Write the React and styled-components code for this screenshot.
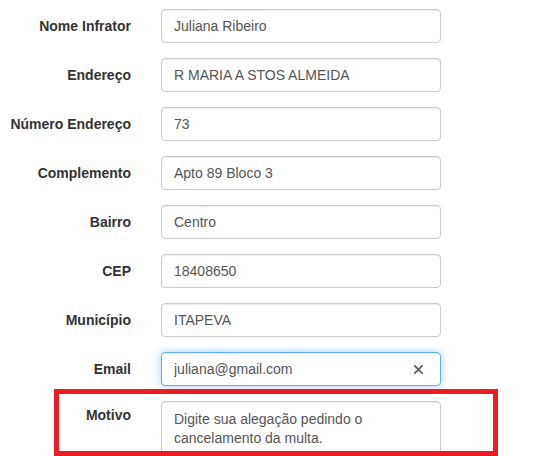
import React from "react";
import styled, { createGlobalStyle } from "styled-components";

const Global = createGlobalStyle`
  html, body { margin: 0; padding: 0; background: #fff; }
  body { font-family: "Liberation Sans", Arial, Helvetica, sans-serif; font-size: 14px; line-height: 1.42857; color: #333; }
  * { box-sizing: border-box; }
`;

const Page = styled.div`
  position: relative;
  width: 549px;
  height: 456px;
  overflow: hidden;
  padding-top: 9px;
`;

const Form = styled.form`
  display: flex;
  flex-direction: column;
  gap: 15px;
`;

const Row = styled.div`
  display: grid;
  grid-template-columns: 146px 310px;
  align-items: start;
`;

const Label = styled.label`
  text-align: right;
  font-weight: bold;
  padding: ${(p) => (p.$tight ? "5px" : "8px")} 15px 0 0;
  white-space: nowrap;
  color: #333;
`;

const Field = styled.div`
  position: relative;
  padding-left: 15px;
  width: 295px;
`;

const Input = styled.input`
  display: block;
  width: 280px;
  height: 34px;
  padding: 6px 12px;
  font: inherit;
  font-size: 14px;
  color: #555;
  background: #fff;
  border: 1px solid ${(p) => (p.$focus ? "#66afe9" : "#ccc")};
  border-radius: 4px;
  outline: none;
  box-shadow: ${(p) =>
    p.$focus
      ? "inset 0 1px 1px rgba(0,0,0,.075), 0 0 8px rgba(102,175,233,.6)"
      : "inset 0 1px 1px rgba(0,0,0,.075)"};
`;

const TextArea = styled.textarea`
  display: block;
  width: 280px;
  height: 80px;
  padding: 8px 12px 6px;
  font: inherit;
  font-size: 14px;
  line-height: 18.6px;
  color: #555;
  background: #fff;
  border: 1px solid #ccc;
  border-radius: 4px;
  resize: none;
  outline: none;
  overflow: hidden;
  box-shadow: inset 0 1px 1px rgba(0,0,0,.075);
`;

const Clear = styled.span`
  position: absolute;
  left: 268px;
  top: 13px;
  width: 9px;
  height: 9px;
  display: block;
  svg { display: block; }
`;

const Highlight = styled.div`
  position: absolute;
  left: 54px;
  top: 389px;
  width: 444px;
  height: 67px;
  border: 5px solid #ed1c24;
  pointer-events: none;
`;

const fields = [
  ["Nome Infrator", "Juliana Ribeiro"],
  ["Endereço", "R MARIA A STOS ALMEIDA"],
  ["Número Endereço", "73"],
  ["Complemento", "Apto 89 Bloco 3"],
  ["Bairro", "Centro"],
  ["CEP", "18408650"],
  ["Município", "ITAPEVA"],
];

export default function App() {
  return (
    <Page>
      <Global />
      <Form onSubmit={(e) => e.preventDefault()}>
        {fields.map(([l, v]) => (
          <Row key={l}>
            <Label>{l}</Label>
            <Field>
              <Input defaultValue={v} readOnly />
            </Field>
          </Row>
        ))}
        <Row>
          <Label>Email</Label>
          <Field>
            <Input $focus defaultValue="juliana@gmail.com" readOnly />
            <Clear>
              <svg width="9" height="9" viewBox="0 0 9 9">
                <path d="M0.8 0.8 L8.2 8.2 M8.2 0.8 L0.8 8.2" stroke="#555" strokeWidth="1.6" strokeLinecap="square" />
              </svg>
            </Clear>
          </Field>
        </Row>
        <Row>
          <Label $tight>Motivo</Label>
          <Field>
            <TextArea defaultValue="Digite sua alegação pedindo o cancelamento da multa." readOnly />
          </Field>
        </Row>
      </Form>
      <Highlight />
    </Page>
  );
}
